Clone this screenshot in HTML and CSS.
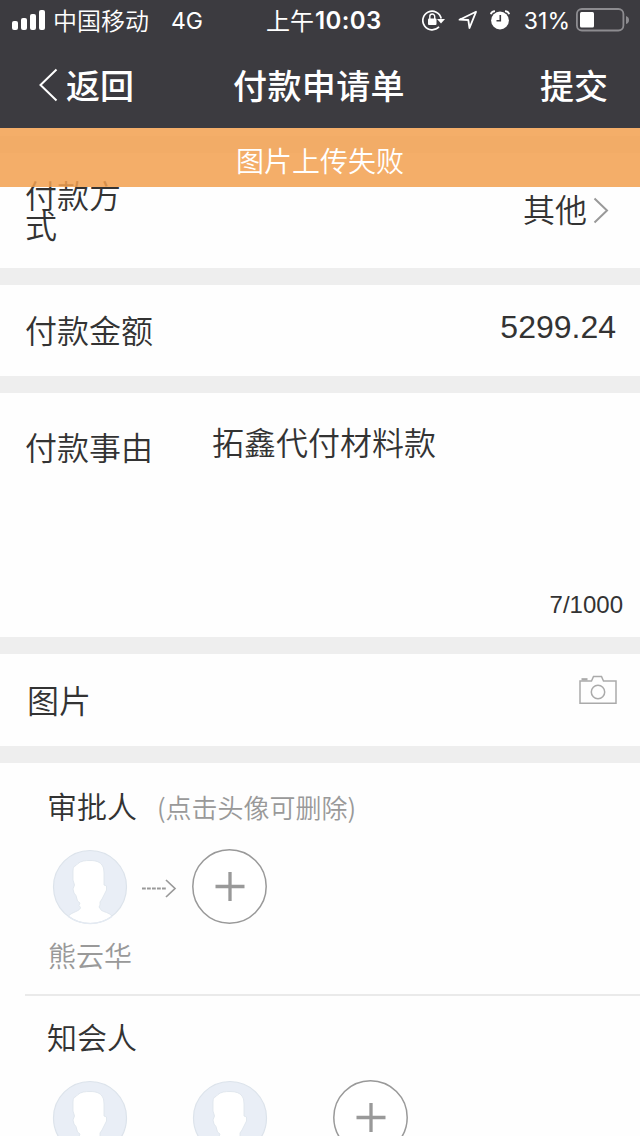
FILE: index.html
```
<!DOCTYPE html>
<html lang="zh-CN">
<head>
    <meta charset="UTF-8">
    <meta name="viewport" content="width=device-width, initial-scale=1.0">
    <title>付款申请单</title>
    <link rel="stylesheet" href="styles.css">
</head>
<body>
    <!-- Shared shapes -->
    <svg class="symbols" width="0" height="0">
        <symbol id="avatar" viewBox="0 0 76 76">
            <circle cx="38" cy="38" r="36.5" fill="#e9eef6" stroke="#dce3eb" stroke-width="1.2"/>
            <path d="M16.5 67C20 63 28.5 62 28.5 58.5L27 56.5L28 54L25.500 52L24 46.500L22 44L21 40L22.500 36L21 31V22Q21 17 24 16.500L26 14.500C29 12 33 11.500 38 11.500C44 11.500 48 13 50 16Q52 18 52 24V36L54.500 37V41L52.500 45L50 50L48 53V56L47 58L49.500 61.500C52 63 57 63.500 60 67A36 36 0 0 1 16.500 67Z" fill="#fff" stroke="#dce3eb" stroke-width=".8" stroke-linejoin="round"/>
            <path d="M16.500 67.500A36.500 36.500 0 0 0 60 67.500" fill="none" stroke="#e4eaf2" stroke-width="1.300"/>
        </symbol>
        <symbol id="add" viewBox="0 0 76 76">
            <circle cx="38.500" cy="37.500" r="36.700" fill="#fff" stroke="#999" stroke-width="1.500"/>
            <path d="M24.500 37.500H53.500M39 23V52" fill="none" stroke="#999" stroke-width="3.300"/>
        </symbol>
    </svg>

    <header class="header">
        <div class="status-bar">
            <div class="status-left">
                <svg class="signal" width="34" height="20" viewBox="0 0 34 20" fill="#fff">
                    <rect x="0" y="11" width="6" height="9" rx="2"/>
                    <rect x="9" y="8" width="6" height="12" rx="2"/>
                    <rect x="18" y="4" width="6" height="16" rx="2"/>
                    <rect x="27" y="0" width="6" height="20" rx="2"/>
                </svg>
                <span class="carrier">中国移动</span>
                <span class="network">4G</span>
            </div>
            <div class="clock"><span>上午</span><b>10:03</b></div>
            <div class="status-right">
                <svg width="24" height="22" viewBox="0 0 24 22">
                    <path d="M17 17.800A9.300 9.300 0 1 1 19.200 9.500" fill="none" stroke="#fff" stroke-width="1.700"/>
                    <path d="M15 10H23L19 14.500Z" fill="#fff"/>
                    <rect x="6" y="9.500" width="8.500" height="6.500" rx="1" fill="#fff"/>
                    <path d="M7.800 10V7.500a2.450 2.450 0 0 1 4.900 0V10" fill="none" stroke="#fff" stroke-width="1.400"/>
                </svg>
                <svg class="location" width="20" height="20" viewBox="0 0 20 20">
                    <path d="M1.500 9.700L18 1.800L11.500 18L10.300 10Z" fill="none" stroke="#fff" stroke-width="1.800" stroke-linejoin="round"/>
                </svg>
                <svg class="alarm" width="20" height="20" viewBox="0 0 20 20">
                    <circle cx="10" cy="10.500" r="8.900" fill="#fff"/>
                    <path d="M.8 4.300Q1.500 1.500 5 1.200M19.200 4.300Q18.500 1.500 15 1.200" fill="none" stroke="#fff" stroke-width="1.800"/>
                    <path d="M10.300 5V10.800H6.500" fill="none" stroke="#3c3b40" stroke-width="1.600"/>
                </svg>
                <span class="percent">31%</span>
                <svg class="battery" width="53" height="24" viewBox="0 0 53 24">
                    <rect x=".9" y="1" width="46.500" height="21.500" rx="5" fill="none" stroke="#8d8c90" stroke-width="1.800"/>
                    <rect x="4" y="4" width="14" height="15.500" rx="1.500" fill="#fff"/>
                    <path d="M50 8Q53 9 53 12T50 16Z" fill="#8d8c90"/>
                </svg>
            </div>
        </div>
        <nav class="nav-bar">
            <a class="back">
                <svg width="20" height="34" viewBox="0 0 20 34"><path d="M18.500 1.500L2.500 17L18.500 32.500" fill="none" stroke="#fff" stroke-width="2"/></svg>
                <span>返回</span>
            </a>
            <h1>付款申请单</h1>
            <a class="submit">提交</a>
        </nav>
        <div class="toast">图片上传失败</div>
    </header>

    <main class="form">
        <section class="row method">
            <label class="method-label">付款方式</label>
            <span class="value select">其他
                <svg width="16" height="28" viewBox="0 0 16 28"><path d="M1.500 1.500L14 13.500L1.500 25.500" fill="none" stroke="#999" stroke-width="2"/></svg>
            </span>
        </section>

        <section class="row amount">
            <label>付款金额</label>
            <span class="value number">5299.24</span>
        </section>

        <section class="row reason">
            <label>付款事由</label>
            <p class="reason-text">拓鑫代付材料款</p>
            <span class="counter">7/1000</span>
        </section>

        <section class="row picture">
            <label>图片</label>
            <svg class="camera" width="38" height="30" viewBox="0 0 38 30" fill="none" stroke="#aaa" stroke-width="1.500">
                <path d="M1 6H12.500L14.500 1.500H22.500L24.500 6H37V28.300H1Z"/>
                <path d="M2.500 4.300H8.500" stroke-width="2.300"/>
                <circle cx="19" cy="17" r="6.700"/>
            </svg>
        </section>

        <section class="people approvers">
            <h2>审批人<small>(点击头像可删除)</small></h2>
            <div class="people-list">
                <div class="person">
                    <svg class="face"><use href="#avatar"/></svg>
                    <span>熊云华</span>
                </div>
                <svg class="arrow" width="36" height="20" viewBox="0 0 36 20" fill="none" stroke="#999" stroke-width="1.700">
                    <path d="M1 10.500H25" stroke-width="2" stroke-dasharray="3.800 1.200"/>
                    <path d="M25 2L34 10.500L25 19"/>
                </svg>
                <svg class="face"><use href="#add"/></svg>
            </div>
        </section>

        <section class="people notified">
            <h2>知会人</h2>
            <div class="people-list">
                <svg class="face"><use href="#avatar"/></svg>
                <svg class="face"><use href="#avatar"/></svg>
                <svg class="face"><use href="#add"/></svg>
            </div>
        </section>
    </main>
</body>
</html>
```
FILE: styles.css
```
* {
    box-sizing: border-box;
    margin: 0;
    padding: 0;
}

body {
    height: 1136px;
    overflow: hidden;
    background-color: #fefefe;
    color: #333;
    font-family: "Liberation Sans", "Noto Sans CJK SC", sans-serif;
    font-size: 32px;
    font-weight: 350;
    line-height: 32px;
}

svg {
    display: block;
    flex-shrink: 0;
}

.symbols {
    position: absolute;
}

/* Header */
.header {
    position: relative;
    height: 128px;
    background-color: #3c3b40;
    color: #fff;
    font-family: "Noto Sans CJK SC", sans-serif;
}

.status-bar {
    display: grid;
    grid-template-columns: 266px 1fr auto;
    align-items: center;
    height: 40px;
    font-size: 24px;
    line-height: 38px;
}

.status-left,
.status-right,
.clock {
    display: flex;
    align-items: center;
    white-space: nowrap;
}

.status-left {
    padding-left: 12px;
}

.carrier {
    margin-left: 7px;
}

.network {
    margin-left: 22px;
    padding-top: 2px;
    font-family: Inter, sans-serif;
    font-size: 23px;
    font-weight: 400;
}

.clock span {
    font-weight: 400;
}

.clock b {
    margin-left: 1px;
    padding-top: 2px;
    font-family: Inter, sans-serif;
    font-size: 24px;
    font-weight: 600;
    letter-spacing: 0.4px;
}

.status-right {
    padding-right: 11px;
}

.location {
    margin-left: 12px;
}

.alarm {
    margin-left: 12px;
}

.percent {
    margin-left: 14px;
    padding-top: 2px;
    font-family: Inter, sans-serif;
    font-size: 23px;
    font-weight: 400;
}

.battery {
    margin-left: 6px;
}

.nav-bar {
    display: grid;
    grid-template-columns: 1fr auto 1fr;
    align-items: center;
    height: 88px;
    padding: 1px 32px 0 38px;
    font-size: 34px;
    font-weight: 500;
}

.nav-bar h1 {
    margin-left: -8px;
    font-size: 34px;
    font-weight: 500;
    letter-spacing: 0.4px;
}

.back {
    display: flex;
    align-items: center;
    gap: 8px;
}

.submit {
    text-align: right;
}

/* Lies over the top of the form */
.toast {
    position: absolute;
    top: 128px;
    left: 0;
    width: 100%;
    height: 59px;
    background-color: rgba(242, 160, 79, 0.85);
    font-size: 28px;
    line-height: 64px;
    text-align: center;
}

/* Form */
.form {
    padding-top: 8px;
}

.row {
    display: flex;
    border-top: 17px solid #eee;
    padding-left: 25px;
}

.value {
    margin-left: auto;
}

.method {
    align-items: center;
    height: 132px;
    padding-top: 1px;
    padding-right: 31px;
}

.method-label {
    width: 97px;
    padding-top: 2px;
    line-height: 30px;
}

.select {
    display: flex;
    align-items: center;
    gap: 6px;
}

.amount {
    height: 108px;
    padding-top: 31px;
    padding-right: 24px;
}

.number {
    margin-top: -5px;
}

.reason {
    display: grid;
    grid-template-columns: 187px 1fr;
    grid-template-rows: 1fr auto;
    height: 261px;
    padding-top: 40px;
    padding-right: 17px;
    padding-bottom: 16px;
}

.reason-text {
    margin-top: -5px;
}

.counter {
    grid-column: 2;
    justify-self: end;
    font-size: 24px;
}

.picture {
    height: 109px;
    padding-top: 32px;
    padding-right: 23px;
    padding-left: 27px;
}

.camera {
    margin-top: -11px;
    margin-left: auto;
}

/* People */
.people {
    padding-left: 47px;
}

.people h2 {
    font-size: 30px;
    font-weight: 350;
}

.people small {
    margin-left: 20px;
    color: #999;
    font-family: "Noto Sans CJK SC", sans-serif;
    font-size: 26px;
}

.approvers {
    height: 248px;
    border-top: 17px solid #eee;
    padding-top: 28px;
}

.people-list {
    display: flex;
    margin-top: 25px;
    padding-left: 5px;
}

.face {
    width: 76px;
    height: 76px;
}

.person {
    width: 76px;
    color: #999;
    font-size: 28px;
    white-space: nowrap;
}

.person span {
    display: block;
    margin-top: 17px;
    margin-left: -4px;
}

.arrow {
    margin: 29px 14px 0 13px;
}

.notified {
    margin-left: 25px;
    padding-top: 27px;
    padding-left: 22px;
    border-top: 2px solid #eaeaea;
}

.notified .people-list {
    gap: 64px;
}
```
